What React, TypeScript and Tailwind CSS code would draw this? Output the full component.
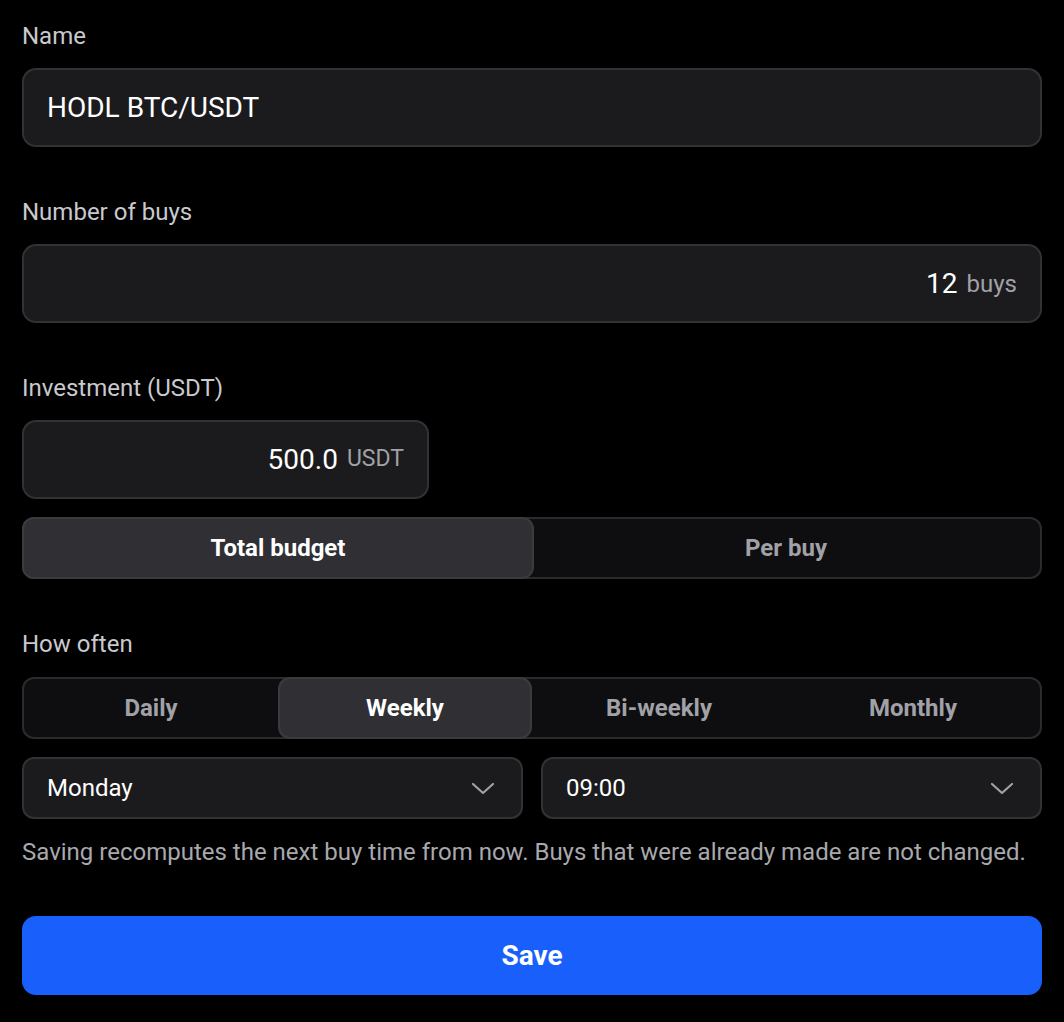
import React from "react";

const font = { fontFamily: "Roboto, 'Liberation Sans', sans-serif" };

function Chevron() {
  return (
    <svg width="24" height="24" viewBox="0 0 24 24" fill="none" stroke="#a1a1a7" strokeWidth="2.2" strokeLinecap="round" strokeLinejoin="round">
      <path d="M2 8l10 9 10-9" />
    </svg>
  );
}

function Label({ children }: { children: React.ReactNode }) {
  return <div className="h-[28px] leading-[28px] text-[24px] text-[#c9c9ce]">{children}</div>;
}

export default function App() {
  return (
    <div className="min-h-[1022px] bg-black px-[22px] pt-[22px] text-white" style={font}>
      <Label>Name</Label>
      <div className="mt-[18px] flex h-[79px] items-center rounded-[14px] border-2 border-[#323236] bg-[#1b1b1e] px-[23px] text-[28px]">
        HODL BTC/USDT
      </div>

      <div className="mt-[51px]">
        <Label>Number of buys</Label>
      </div>
      <div className="mt-[18px] flex h-[79px] items-center justify-end gap-[9px] rounded-[14px] border-2 border-[#323236] bg-[#1b1b1e] px-[23px]">
        <span className="text-[28px]">12</span>
        <span className="text-[24px] text-[#a1a1a7]">buys</span>
      </div>

      <div className="mt-[51px]">
        <Label>Investment (USDT)</Label>
      </div>
      <div className="mt-[18px] flex h-[79px] w-[407px] items-center justify-end gap-[9px] rounded-[14px] border-2 border-[#323236] bg-[#1b1b1e] px-[23px]">
        <span className="text-[28px]">500.0</span>
        <span className="text-[23px] text-[#a1a1a7]">USDT</span>
      </div>

      <div className="mt-[18px] grid h-[62px] grid-cols-2 rounded-[12px] border-2 border-[#2b2b2f] bg-[#0e0e10]">
        <div className="-m-[2px] flex items-center justify-center rounded-[12px] border-2 border-[#3a3a3f] bg-[#2f2f34] text-[24px] font-bold text-white">
          Total budget
        </div>
        <div className="flex items-center justify-center text-[24px] font-bold text-[#a1a1a7]">Per buy</div>
      </div>

      <div className="mt-[51px]">
        <Label>How often</Label>
      </div>
      <div className="mt-[19px] grid h-[62px] grid-cols-4 rounded-[12px] border-2 border-[#2b2b2f] bg-[#0e0e10]">
        <div className="flex items-center justify-center text-[24px] font-bold text-[#a1a1a7]">Daily</div>
        <div className="-my-[2px] flex items-center justify-center rounded-[12px] border-2 border-[#3a3a3f] bg-[#2f2f34] text-[24px] font-bold text-white">
          Weekly
        </div>
        <div className="flex items-center justify-center text-[24px] font-bold text-[#a1a1a7]">Bi-weekly</div>
        <div className="flex items-center justify-center text-[24px] font-bold text-[#a1a1a7]">Monthly</div>
      </div>

      <div className="mt-[18px] grid grid-cols-2 gap-[18px]">
        <div className="flex h-[62px] items-center justify-between rounded-[12px] border-2 border-[#323236] bg-[#1b1b1e] pl-[23px] pr-[26px] text-[24px]">
          <span>Monday</span>
          <Chevron />
        </div>
        <div className="flex h-[62px] items-center justify-between rounded-[12px] border-2 border-[#323236] bg-[#1b1b1e] pl-[23px] pr-[26px] text-[24px]">
          <span>09:00</span>
          <Chevron />
        </div>
      </div>

      <div className="mt-[19px] whitespace-nowrap text-[24px] leading-[28px] text-[#a8a8ad]">
        Saving recomputes the next buy time from now. Buys that were already made are not changed.
      </div>

      <button className="mt-[50px] flex h-[79px] w-full items-center justify-center rounded-[14px] bg-[#185ffb] text-[28px] font-bold text-white">
        Save
      </button>
    </div>
  );
}
